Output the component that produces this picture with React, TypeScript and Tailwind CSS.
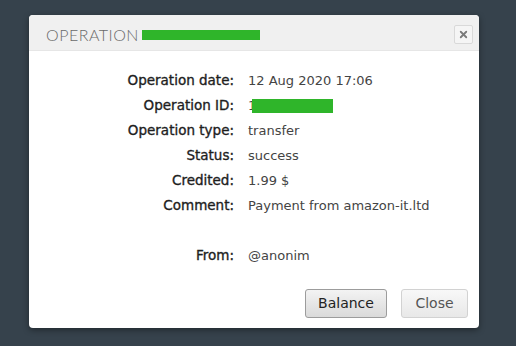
import { X } from "lucide-react";

const rows: { label: string; value: React.ReactNode }[] = [
    { label: "Operation date:", value: "12 Aug 2020 17:06" },
    {
        label: "Operation ID:",
        value: (
            <span className="flex items-center">
                1<span className="ml-[-4px] inline-block h-[14px] w-[81px] bg-[#2fb52a]" />
            </span>
        ),
    },
    { label: "Operation type:", value: "transfer" },
    { label: "Status:", value: "success" },
    { label: "Credited:", value: "1.99 $" },
    { label: "Comment:", value: "Payment from amazon-it.ltd" },
    { label: "", value: "" },
    { label: "From:", value: "@anonim" },
];

export default function App() {
    return (
        <div className="w-[516px] h-[346px] bg-[#36424c] pl-[29px] pt-[15px] font-['DejaVu_Sans',sans-serif]">
            <div className="w-[450px] h-[313px] bg-white rounded-[4px] shadow-[0_2px_6px_rgba(0,0,0,0.4)] flex flex-col overflow-hidden">
                {/* Header */}
                <div className="h-[36px] bg-[#f0f0f0] border-b border-[#e6e6e6] flex items-center pl-[17px] pr-[6px] pt-[4px]">
                    <span className="font-['Lato',sans-serif] font-light text-[16px] tracking-[0.5px] text-[#6a6a6a]">OPERATION</span>
                    <span className="ml-[3px] inline-block h-[10px] w-[118px] bg-[#2fb52a]" />
                    <button className="ml-auto mb-[1px] w-[19px] h-[19px] border border-[#d9d9d9] bg-[#f5f5f5] flex items-center justify-center rounded-[2px]">
                        <X className="w-[11px] h-[11px] text-[#7a7a7a]" strokeWidth={4} />
                    </button>
                </div>

                {/* Body */}
                <div className="grid grid-cols-[205px_1fr] gap-x-[14px] pt-[17px] text-[13px] leading-[25px]">
                    {rows.map((r, i) => (
                        <div key={i} className="contents">
                            <div className="text-right text-[13.5px] text-[#1e1e1e] h-[25px] [-webkit-text-stroke:0.35px_#1e1e1e]">{r.label}</div>
                            <div className="text-[#444] h-[25px]">{r.value}</div>
                        </div>
                    ))}
                </div>

                {/* Footer */}
                <div className="flex justify-end gap-[14px] pr-[11px] mt-[21px]">
                    <button className="w-[82px] h-[29px] rounded-[3px] border border-[#9c9c9c] bg-gradient-to-b from-[#f3f3f3] to-[#dadada] text-[14px] text-[#222]">
                        Balance
                    </button>
                    <button className="w-[67px] h-[29px] rounded-[3px] border border-[#d2d2d2] bg-gradient-to-b from-[#f8f8f8] to-[#e8e8e8] text-[14px] text-[#555]">
                        Close
                    </button>
                </div>
            </div>
        </div>
    );
}
